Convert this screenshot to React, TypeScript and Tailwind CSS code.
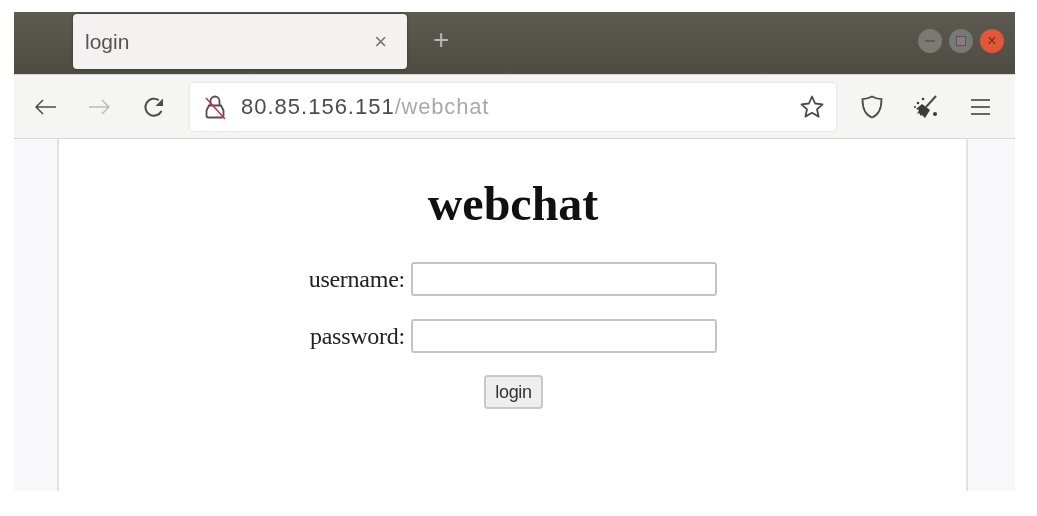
const sans = 'font-["Liberation_Sans",sans-serif]';

const Arrow = ({ flip, className }: { flip?: boolean; className: string }) => (
  <svg width="22" height="20" viewBox="0 0 22 20" fill="none" stroke="currentColor" strokeWidth="1.5" className={className}>
    <path d={flip ? 'M1 10h20M14 3l7 7-7 7' : 'M21 10H1M8 3l-7 7 7 7'} />
  </svg>
);

const Reload = () => (
  <svg width="22" height="22" viewBox="0 0 22 22" fill="none" className="text-[#4c4c4c]">
    <path d="M18.500 15A8.500 8.500 0 1 1 15.800 4.200" stroke="currentColor" strokeWidth="2" />
    <path d="M20 2.500v7.500h-7.500z" fill="currentColor" />
  </svg>
);

const BrokenLock = () => (
  <svg width="24" height="26" viewBox="0 0 24 26" fill="none" stroke="#5a4a50" strokeWidth="1.8">
    <path d="M7.500 11V7a4.500 4.500 0 0 1 9 0v4" />
    <path d="M6 11.500l-2.500 5v5a2 2 0 0 0 2 2h13a2 2 0 0 0 2-2v-5l-2.500-5z" />
    <path d="M3 4l19 21" stroke="#c2355f" strokeWidth="1.700" />
  </svg>
);

const Star = () => (
  <svg width="26" height="26" viewBox="0 0 26 26" fill="none" stroke="#4a4a4a" strokeWidth="1.800" strokeLinejoin="round">
    <path d="M13 2.500l3.100 7 7.400.8-5.500 5 1.600 7.300-6.600-3.800-6.600 3.800 1.600-7.300-5.500-5 7.400-.8z" />
  </svg>
);

const Shield = () => (
  <svg width="24" height="26" viewBox="0 0 24 26" fill="none" stroke="#4a4a4a" strokeWidth="1.800">
    <path d="M12 2.500c3 1.800 6 2.400 9.500 2.700 0 9-2.500 15.500-9.500 18.300C5 20.700 2.500 14.200 2.500 5.200 6 4.900 9 4.300 12 2.500z" />
  </svg>
);

const Broom = () => (
  <svg width="26" height="24" viewBox="0 0 26 24" fill="none">
    <path d="M23 1L13 12" stroke="#4a4a4a" strokeWidth="2" />
    <path d="M9 9l8 6-5 8-3-3-1 1-2-3-2 1 2-4-3-1z" fill="#3c3c3c" />
    <circle cx="22" cy="19" r="2" fill="#3c3c3c" />
    <circle cx="5" cy="8" r="1.300" fill="#3c3c3c" />
    <circle cx="10" cy="4" r="1.300" fill="#3c3c3c" />
    <circle cx="2" cy="12" r="1" fill="#3c3c3c" />
  </svg>
);

const Field = ({ label }: { label: string }) => (
  <div className="flex h-[34px] items-center gap-[6px]">
    <label className="w-[97px] text-right text-[24px] tracking-[-0.25px] whitespace-nowrap text-[#222]">{label}</label>
    <input type="text" className="h-[34px] w-[306px] rounded-[3px] border-2 border-[#c4c4c4] bg-white" />
  </div>
);

export default function App() {
  return (
    <div className="h-[516px] w-[1037px] overflow-hidden bg-white pt-[12px] pl-[14px] blur-[0.7px]">
      <div className="flex h-[479px] w-[1001px] flex-col">
        {/* title bar */}
        <div className={`flex h-[62px] items-start bg-gradient-to-b from-[#5c5a51] to-[#4d4b42] pt-[2px] pl-[59px] ${sans}`}>
          <div className="flex h-[55px] w-[334px] items-center justify-between rounded-[4px] bg-[#f3f2f0] px-[12px] pr-[20px] shadow-[0_0_2px_#222]">
            <span className="text-[21px] text-[#555]">login</span>
            <span className="text-[22px] leading-none text-[#777]">×</span>
          </div>
          <span className="mt-[12px] ml-[26px] text-[28px] leading-none text-[#b9b8b2]">+</span>
          <div className="mt-[15px] mr-[11px] ml-auto flex items-center gap-[7px]">
            <div className="flex h-[24px] w-[24px] items-center justify-center rounded-full bg-[#7b7a72]">
              <div className="h-[2px] w-[10px] bg-[#5f5e56]" />
            </div>
            <div className="flex h-[24px] w-[24px] items-center justify-center rounded-full bg-[#777a74]">
              <div className="h-[10px] w-[10px] border border-[#5d5058] bg-[#8a7a84]" />
            </div>
            <div className="flex h-[24px] w-[24px] items-center justify-center rounded-full bg-[#e0583a] text-[16px] leading-none text-[#7a2c1c]">×</div>
          </div>
        </div>

        {/* toolbar */}
        <div className={`flex h-[65px] items-center border-y border-[#d8d8d6] bg-[#f5f5f4] ${sans}`}>
          <Arrow className="ml-[21px] text-[#4a4a4a]" />
          <Arrow flip className="ml-[31px] text-[#bbbbb9]" />
          <div className="ml-[33px]"><Reload /></div>
          <div className="ml-[25px] flex h-[48px] w-[646px] items-center rounded-[3px] bg-white pr-[11px] pl-[13px] shadow-[0_0_2px_#c8c8c8]">
            <BrokenLock />
            <span className="ml-[14px] text-[22px] tracking-[1px] text-[#4c4c4c]">80.85.156.151</span>
            <span className="text-[22px] tracking-[0.8px] text-[#a9a9a9]">/webchat</span>
            <div className="ml-auto"><Star /></div>
          </div>
          <div className="ml-[24px]"><Shield /></div>
          <div className="ml-[29px]"><Broom /></div>
          <div className="ml-[32px] flex w-[19px] flex-col gap-[5px]">
            <div className="h-[2px] bg-[#666]" />
            <div className="h-[2px] bg-[#666]" />
            <div className="h-[2px] bg-[#666]" />
          </div>
        </div>

        {/* page */}
        <div className="flex min-h-0 flex-1 bg-[#f8f8fa]">
          <div className="w-[43px]" />
          <div className="flex w-[911px] flex-col items-center border-x-2 border-[#e2e2e2] bg-white font-['Liberation_Serif',serif]">
            <h1 className="mt-[35px] ml-[1px] text-[48px] leading-[60px] font-bold text-[#111]">webchat</h1>
            <div className="mt-[28px] flex flex-col gap-[23px]">
              <Field label="username:" />
              <Field label="password:" />
            </div>
            <button className={`mt-[22px] ml-[2px] h-[34px] w-[59px] rounded-[4px] border-2 border-[#c8c8c8] bg-[#eeeeee] text-[18px] tracking-[-0.3px] text-[#333] ${sans}`}>login</button>
          </div>
        </div>
      </div>
    </div>
  );
}
